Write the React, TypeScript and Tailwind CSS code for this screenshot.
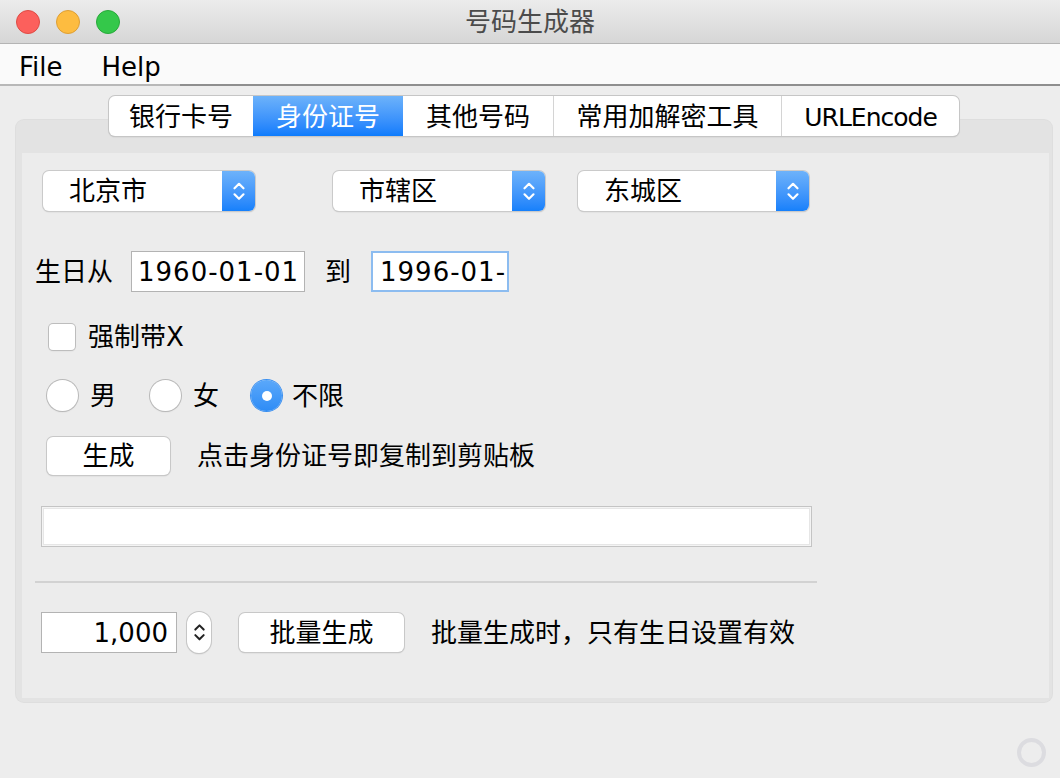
import React from 'react';

const font = "font-['DejaVu_Sans','Noto_Sans_CJK_SC',sans-serif]";

function UpDown({ color, size = 14 }: { color: string; size?: number }) {
  return (
    <svg width={size} height={size * 1.9} viewBox="0 0 14 26" fill="none">
      <path d="M2.5 10 L7 5.5 L11.5 10" stroke={color} strokeWidth="2.2" strokeLinecap="round" strokeLinejoin="round" />
      <path d="M2.5 16 L7 20.5 L11.5 16" stroke={color} strokeWidth="2.2" strokeLinecap="round" strokeLinejoin="round" />
    </svg>
  );
}

function Combo({ label, className }: { label: string; className: string }) {
  return (
    <div className={`flex h-[40px] rounded-[6px] bg-white shadow-[0_0_0_1px_#cacaca,0_1px_1.5px_rgba(0,0,0,0.2)] ${className}`}>
      <div className="flex-1 flex items-center pl-[26px] text-[26px] leading-none text-black">{label}</div>
      <div className="w-[33px] h-full rounded-r-[6px] bg-gradient-to-b from-[#6db2fa] to-[#1580fb] flex items-center justify-center">
        <UpDown color="#ffffff" />
      </div>
    </div>
  );
}

function Button({ label, className }: { label: string; className: string }) {
  return (
    <div className={`flex items-center justify-center rounded-[6px] bg-white text-[26px] leading-none text-black shadow-[0_0_0_1px_#c8c8c8,0_1px_1.5px_rgba(0,0,0,0.22)] ${className}`}>
      {label}
    </div>
  );
}

function Radio({ checked }: { checked?: boolean }) {
  if (checked) {
    return (
      <div className="w-[31px] h-[31px] rounded-full bg-gradient-to-b from-[#5aa8fa] to-[#2d8cf6] flex items-center justify-center shadow-[0_0_0_1px_#3a8ff0]">
        <div className="w-[10px] h-[10px] rounded-full bg-white" />
      </div>
    );
  }
  return <div className="w-[31px] h-[31px] rounded-full bg-white shadow-[0_0_0_1px_#b9b9b9,0_1px_1.5px_rgba(0,0,0,0.15)]" />;
}

const tabs = [
  { label: '银行卡号', w: 'w-[144px]', cls: 'rounded-l-[6px] text-[26px]' },
  { label: '身份证号', w: 'w-[150px]', cls: 'text-[26px]', selected: true },
  { label: '其他号码', w: 'w-[150px]', cls: 'text-[26px]' },
  { label: '常用加解密工具', w: 'w-[228px]', cls: 'text-[26px]' },
  { label: 'URLEncode', w: 'w-[178px]', cls: 'rounded-r-[6px] text-[25px] tracking-[-1px]' },
];

export default function App() {
  return (
    <div className={`relative w-[1060px] h-[778px] overflow-hidden bg-[#ededed] flex flex-col ${font}`}>
      {/* Title bar */}
      <div className="relative h-[44px] shrink-0 bg-gradient-to-b from-[#ececec] to-[#d6d6d6] border-b border-[#b4b4b4] flex items-center">
        <div className="flex items-center gap-[16px] pl-[16px]">
          <div className="w-[24px] h-[24px] rounded-full bg-[#fc605c] border border-[#df4b44]" />
          <div className="w-[24px] h-[24px] rounded-full bg-[#fdbc40] border border-[#de9f34]" />
          <div className="w-[24px] h-[24px] rounded-full bg-[#34c84a] border border-[#28a93a]" />
        </div>
        <div className="absolute inset-0 flex items-center justify-center text-[26px] leading-none text-[#4b4b4b]">号码生成器</div>
      </div>

      {/* Menu bar */}
      <div className="h-[42px] shrink-0 flex bg-[#fafafa]">
        <div className="flex items-center h-full pt-[5px] border-b-2 border-[#b8b8b8] text-[26px] leading-none text-black">
          <span className="pl-[19px]">File</span>
          <span className="pl-[39px] pr-[19px]">Help</span>
        </div>
        <div className="flex-1 h-full border-b-2 border-[#8e8e8e]" />
      </div>

      {/* Tabbed pane */}
      <div className="pt-[10px] pl-[16px]">
        <div className="relative z-10 w-[1036px] flex justify-center">
          <div className="flex h-[40px] rounded-[6px] bg-white shadow-[0_0_0_1px_#c6c6c6,0_1px_1.5px_rgba(0,0,0,0.22)]">
            {tabs.map((t, i) => (
              <div
                key={t.label}
                className={`${t.w} ${t.cls} h-full flex items-center justify-center pt-[2px] leading-none ${
                  t.selected ? 'bg-gradient-to-b from-[#6cb2fa] to-[#0b7bfc] text-white' : 'text-black'
                } ${i > 0 && !t.selected && !tabs[i - 1].selected ? 'border-l border-[#d4d4d4]' : ''}`}
              >
                {t.label}
              </div>
            ))}
          </div>
        </div>

        <div className="mt-[-16px] w-[1036px] h-[582px] rounded-[8px] bg-[#e3e3e3] shadow-[0_0_0_1px_#dedede] pt-[33px] pl-[6px] pr-[3px] pb-[4px]">
          <div className="h-full bg-[#ececec] flex flex-col text-black">
            {/* Region combos */}
            <div className="mt-[18px] flex items-center pl-[21px]">
              <Combo label="北京市" className="w-[212px]" />
              <Combo label="市辖区" className="w-[212px] ml-[78px]" />
              <Combo label="东城区" className="w-[231px] ml-[33px]" />
            </div>

            {/* Birthday range */}
            <div className="mt-[40px] h-[41px] flex items-center pl-[13px] text-[26px] leading-none">
              <span>生日从</span>
              <div className="ml-[18px] w-[174px] h-[41px] bg-white border border-[#b3b3b3] flex items-center pl-[6px] tracking-[1px]">1960-01-01</div>
              <span className="ml-[20px]">到</span>
              <div className="ml-[20px] w-[138px] h-[41px] bg-white border-2 border-[#8cbcf0] flex items-center pl-[7px] overflow-hidden whitespace-nowrap tracking-[1px]">1996-01-</div>
            </div>

            {/* Checkbox */}
            <div className="mt-[31px] h-[27px] flex items-center pl-[27px] text-[26px] leading-none">
              <div className="w-[26px] h-[26px] rounded-[4px] bg-white shadow-[0_0_0_1px_#bdbdbd,0_1px_1.5px_rgba(0,0,0,0.15)]" />
              <span className="ml-[13px]">强制带X</span>
            </div>

            {/* Gender radios */}
            <div className="mt-[30px] h-[31px] flex items-center pl-[25px] text-[26px] leading-none">
              <Radio />
              <span className="ml-[12px]">男</span>
              <div className="ml-[34px]"><Radio /></div>
              <span className="ml-[12px]">女</span>
              <div className="ml-[32px]"><Radio checked /></div>
              <span className="ml-[10px]">不限</span>
            </div>

            {/* Generate */}
            <div className="mt-[26px] h-[38px] flex items-center pl-[25px] text-[26px] leading-none">
              <Button label="生成" className="w-[123px] h-[38px]" />
              <span className="ml-[27px]">点击身份证号即复制到剪贴板</span>
            </div>

            {/* Result field */}
            <div className="mt-[31px] ml-[19px] w-[771px] h-[41px] border border-[#c4c4c4] bg-[#f4f4f4] p-[1px]">
              <div className="w-full h-full bg-white border border-[#e6e6e6]" />
            </div>

            {/* Separator */}
            <div className="mt-[34px] ml-[13px] w-[782px] h-[2px] bg-[#d2d2d2]" />

            {/* Batch */}
            <div className="mt-[29px] h-[41px] flex items-center pl-[19px] text-[26px] leading-none">
              <div className="w-[136px] h-[41px] bg-white border border-[#b3b3b3] flex items-center justify-end pr-[8px]">1,000</div>
              <div className="ml-[10px] w-[24px] h-[41px] rounded-[12px] bg-white shadow-[0_0_0_1px_#c6c6c6,0_1px_1.5px_rgba(0,0,0,0.2)] flex items-center justify-center">
                <UpDown color="#222222" size={13} />
              </div>
              <Button label="批量生成" className="ml-[28px] w-[165px] h-[39px]" />
              <span className="ml-[27px]">批量生成时，只有生日设置有效</span>
            </div>
          </div>
        </div>
      </div>

      {/* Resize/progress indicator */}
      <div className="absolute left-[1017px] top-[738px] w-[29px] h-[29px] rounded-full border-[4px] border-[#dcdce0]" />
    </div>
  );
}
